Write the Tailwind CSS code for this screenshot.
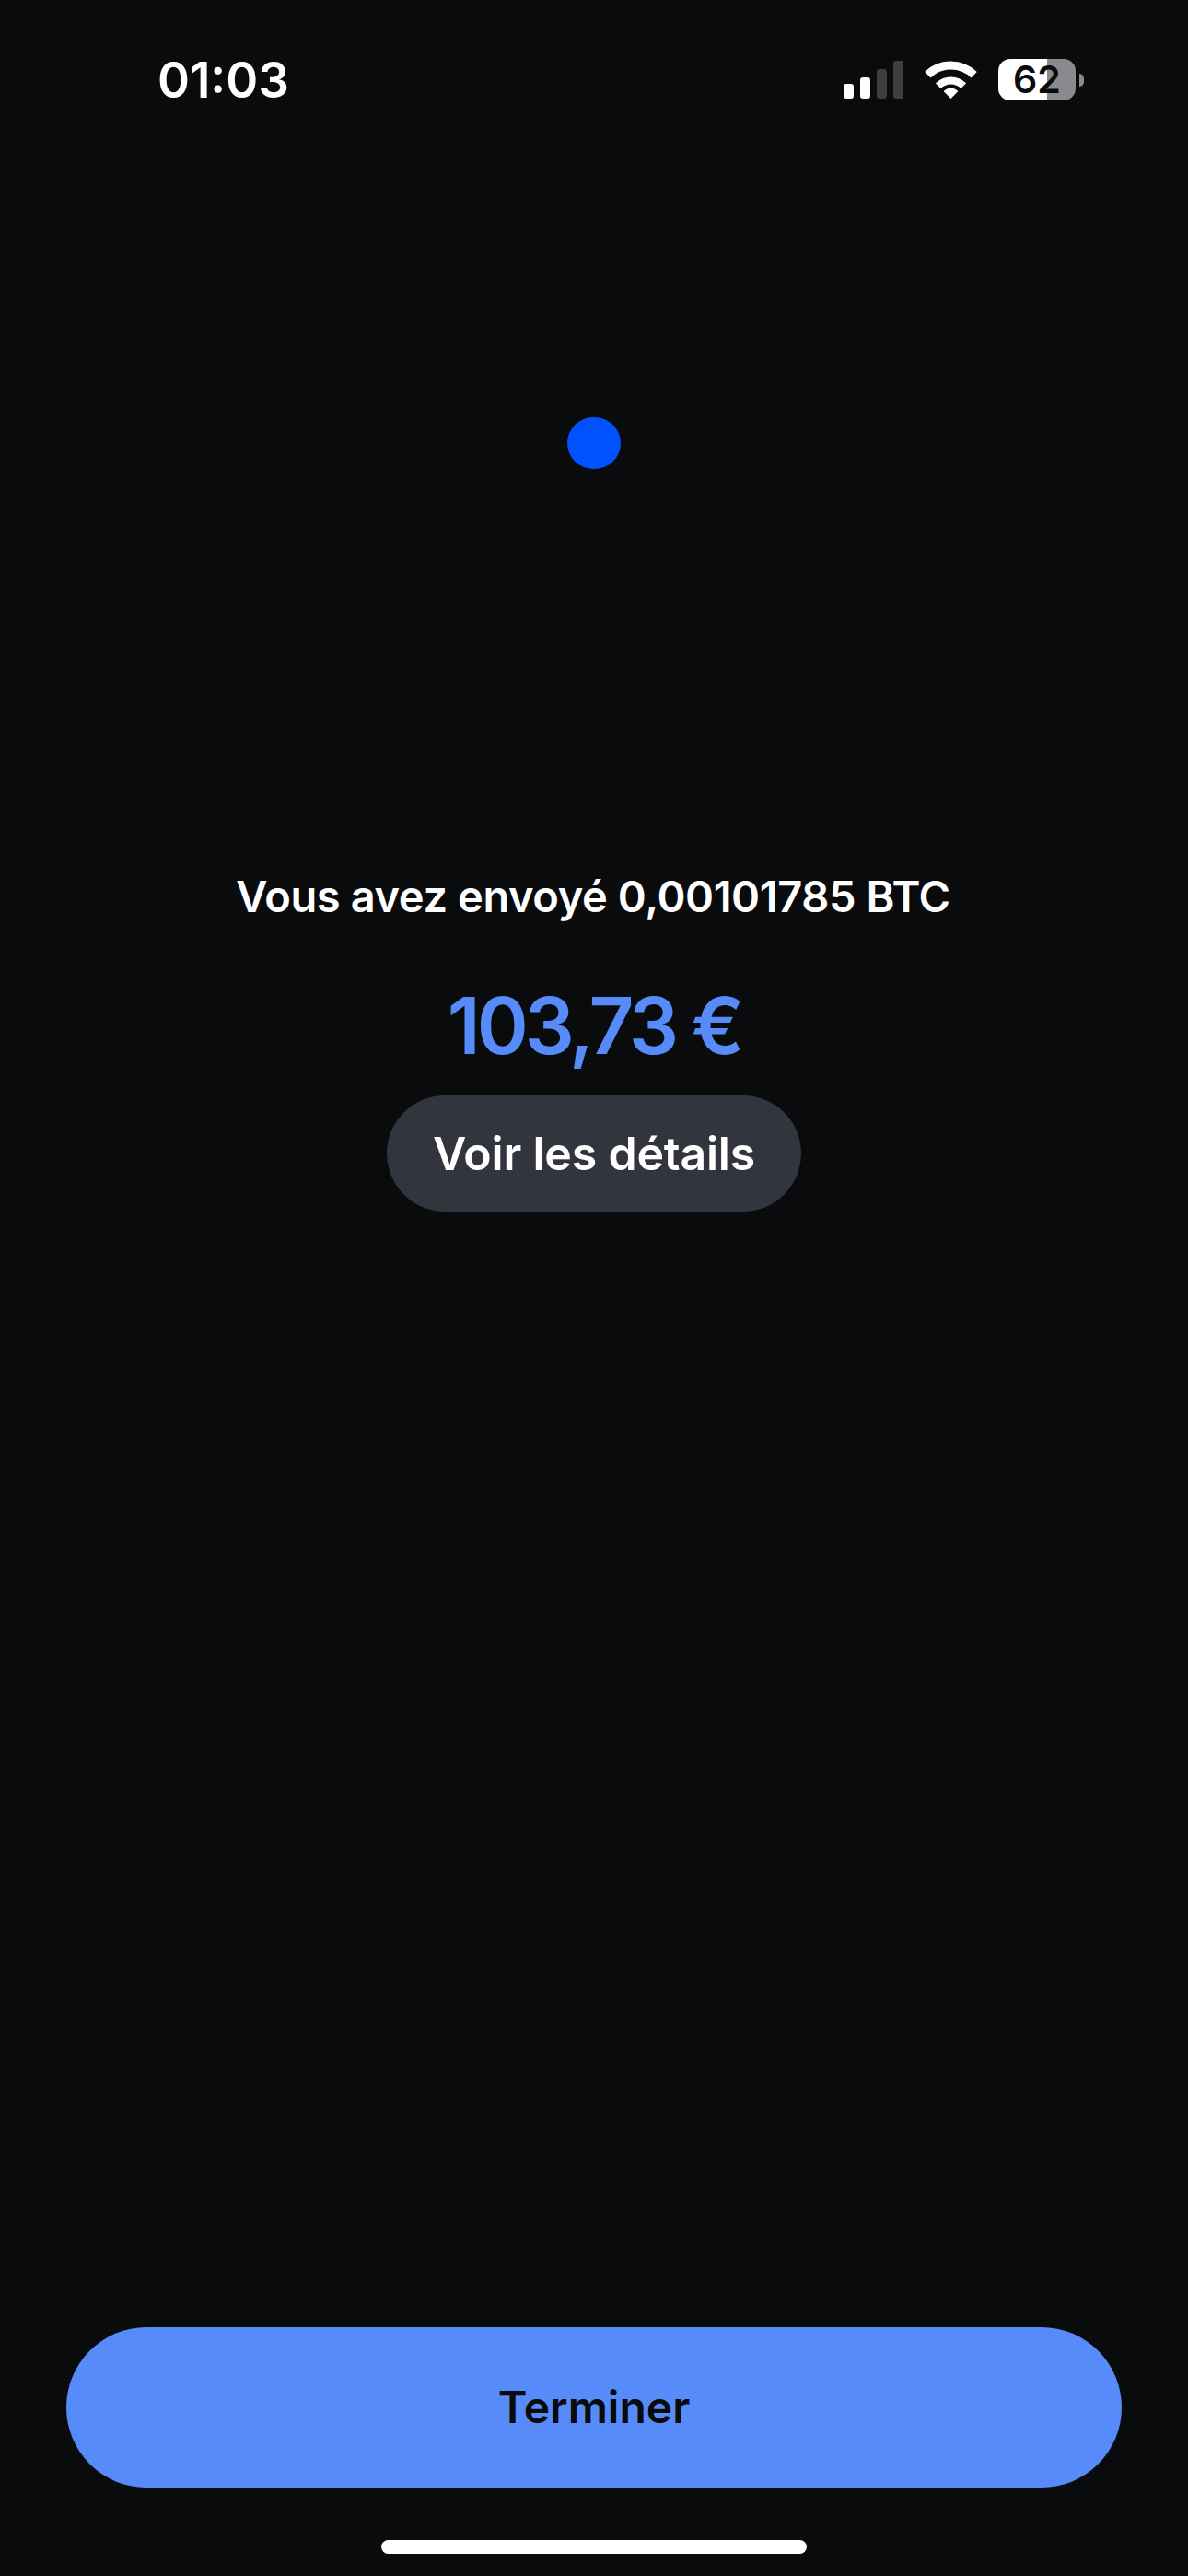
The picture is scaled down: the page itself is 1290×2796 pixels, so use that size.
<!DOCTYPE html>
<html lang="fr">
<head>
  <meta charset="UTF-8">
  <meta name="viewport" content="width=device-width, initial-scale=1.0">
  <title>Envoi confirmé</title>
  <script src="https://cdn.jsdelivr.net/npm/@tailwindcss/browser@4"></script>
</head>
<body class="bg-[#0a0b0d] text-white font-['Inter',sans-serif]">
  <div class="w-[1290px] h-[2796px] flex flex-col">

    <!-- status bar -->
    <header class="h-[174px] pt-[56px] pl-[171px] pr-[113px] flex justify-between items-start shrink-0">
      <span class="text-[53px] leading-[62px] font-semibold">01:03</span>
      <div class="flex items-end h-[54px] mt-[4px]">
        <div class="flex items-end gap-[7px] mb-[7px]">
          <span class="w-[11px] h-[16px] rounded-[3px] bg-white"></span>
          <span class="w-[11px] h-[23px] rounded-[3px] bg-white"></span>
          <span class="w-[11px] h-[32px] rounded-[3px] bg-[#3d3e40]"></span>
          <span class="w-[11px] h-[41px] rounded-[3px] bg-[#3d3e40]"></span>
        </div>
        <svg class="ml-[23px] mb-[7px]" width="57" height="41" viewBox="0 0 57 41" fill="none">
          <path d="M3.4 15.2A36 36 0 0 1 53.6 15.2" stroke="#fff" stroke-width="9"/>
          <path d="M14.7 27.2A19.5 19.5 0 0 1 42.3 27.2" stroke="#fff" stroke-width="8"/>
          <path d="M28.5 41L20.6 33.1A11 11 0 0 1 36.4 33.1Z" fill="#fff"/>
        </svg>
        <div class="ml-[23px] w-[84px] h-[45px] mb-[5px] rounded-[13px] bg-[linear-gradient(90deg,#fff_63%,#8a8a8c_63%)] flex items-center justify-center text-[#0a0b0d] text-[41px] leading-none font-semibold">62</div>
        <span class="ml-[4px] mb-[20px] w-[5px] h-[14px] rounded-r-full bg-[#8a8a8c]"></span>
      </div>
    </header>

    <!-- confirmation -->
    <main class="flex-1 flex flex-col items-center">
      <span class="mt-[279px] w-[58px] h-[56px] rounded-full bg-[#0052ff]"></span>
      <p class="mt-[434px] text-[47px] leading-[60px] font-semibold tracking-[-0.4px] -translate-x-[1px]">Vous avez envoyé 0,00101785 BTC</p>
      <p class="mt-[61px] text-[85px] leading-[100px] font-semibold tracking-[-4px] text-[#578bfa]">103,73 €</p>
      <button class="mt-[25px] w-[450px] h-[126px] rounded-full bg-[#32353d] text-[50px] font-semibold tracking-[-0.2px] text-white">Voir les détails</button>
    </main>

    <!-- bottom action -->
    <footer class="px-[72px] shrink-0">
      <button class="w-full h-[174px] rounded-[87px] bg-[#578bfa] text-[#0a0b0d] text-[48px] font-semibold">Terminer</button>
      <div class="mt-[57px] mb-[24px] mx-auto w-[462px] h-[15px] rounded-full bg-white"></div>
    </footer>
  </div>
</body>
</html>
